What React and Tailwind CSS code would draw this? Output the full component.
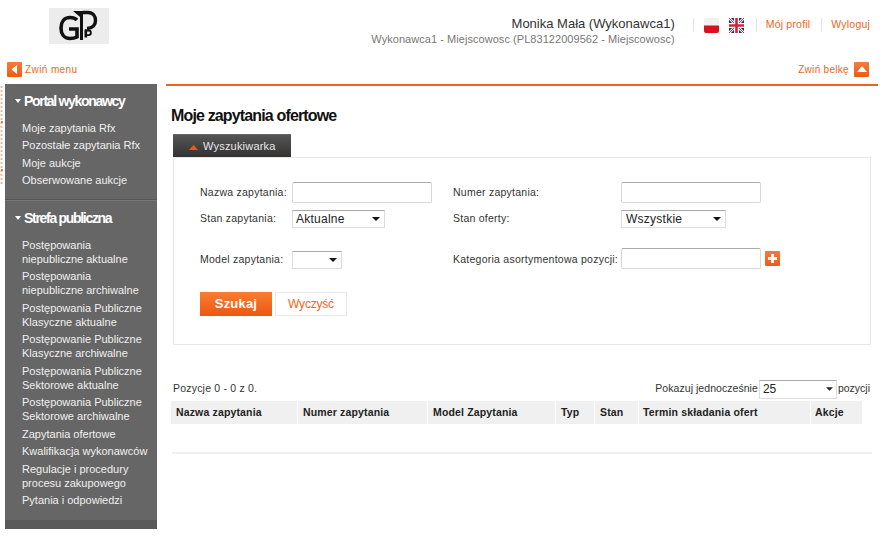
const LINK = "text-[#f26522]";
const sans = "font-['Liberation_Sans',Arial,sans-serif]";

function Logo() {
  return (
    <div className="w-[60px] h-[36px] bg-[#ececec]">
      <svg width="60" height="36" viewBox="0 0 60 36" className="block">
        <path d="M28 12 C26 10 23.5 9.5 21 9.5 C15 9.5 12 14 12 20 C12 26 15 30.5 21 30.5 C24 30.5 26 30 28 29 V21 H20" fill="none" stroke="#111" strokeWidth="3.6" />
        <path d="M24 3 H31 V9 Z" fill="#111" />
        <rect x="31" y="3" width="3" height="29" fill="#111" />
        <path d="M34 4.5 H39 C44 4.5 46.5 8 46.5 12.5 C46.5 17 44 20 38 20.5" fill="none" stroke="#111" strokeWidth="3.4" />
        <rect x="35.5" y="21.5" width="2.6" height="8" fill="#111" />
        <path d="M36 22.5 H39.6 a2.2 2.2 0 0 1 0 4.6 H36" fill="none" stroke="#111" strokeWidth="1.8" />
      </svg>
    </div>
  );
}

function OrangeBox({ children }) {
  return (
    <span className="w-[15px] h-[15px] bg-gradient-to-b from-[#f47b3c] to-[#ee5a14] flex items-center justify-center shrink-0 rounded-[1px]">
      {children}
    </span>
  );
}

function Flags() {
  return (
    <>
      <svg width="15" height="15" viewBox="0 0 15 15" className="block">
        <rect width="15" height="15" rx="2" fill="#f1f1f1" />
        <path d="M0 7.5 H15 V13 a2 2 0 0 1 -2 2 H2 a2 2 0 0 1 -2 -2 Z" fill="#d8101f" />
      </svg>
      <svg width="15" height="15" viewBox="0 0 15 15" className="block ml-[10px]">
        <rect width="15" height="15" rx="2" fill="#2b2f63" />
        <path d="M0 0 L15 15 M15 0 L0 15" stroke="#fff" strokeWidth="2.6" />
        <path d="M0 0 L15 15 M15 0 L0 15" stroke="#d3233a" strokeWidth="1" />
        <path d="M7.5 0 V15 M0 7.5 H15" stroke="#fff" strokeWidth="5" />
        <path d="M7.5 0 V15 M0 7.5 H15" stroke="#d3233a" strokeWidth="2.6" />
      </svg>
    </>
  );
}

function Header() {
  return (
    <header className="h-[58px] relative flex">
      <div className="pl-[49px] pt-[8px]"><Logo /></div>
      <div className="ml-auto pr-[20px] flex items-start pt-[16px]">
        <div className="text-right mr-[18px]">
          <div className="text-[13px] leading-[16px] text-[#333]">Monika Mała (Wykonawca1)</div>
          <div className="text-[11px] leading-[14px] tracking-[0.05px] text-[#777]">Wykonawca1 - Miejscowosc (PL83122009562 - Miejscowosc)</div>
        </div>
        <span className="w-px h-[14px] bg-[#e4e4e4] mt-[2px]" />
        <div className="flex ml-[10px] mt-[2px]"><Flags /></div>
        <span className="w-px h-[14px] bg-[#e4e4e4] ml-[12px] mt-[2px]" />
        <a className={`text-[10.5px] leading-[14px] mt-[1px] ml-[9px] tracking-[0.2px] ${LINK}`}>Mój profil</a>
        <span className="w-px h-[14px] bg-[#e4e4e4] ml-[11px] mt-[2px]" />
        <a className={`text-[10.5px] leading-[14px] mt-[1px] ml-[9px] tracking-[0.2px] ${LINK}`}>Wyloguj</a>
      </div>
    </header>
  );
}

function Bars() {
  return (
    <div className="h-[26px] flex items-center justify-between pl-[7px] pr-[21px] pb-[4px]">
      <div className="flex items-center gap-[3px]">
        <OrangeBox>
          <svg width="7" height="9" viewBox="0 0 7 9"><path d="M6 0 V9 L0.5 4.5 Z" fill="#fff" /></svg>
        </OrangeBox>
        <a className={`text-[10px] tracking-[0.4px] ${LINK}`}>Zwiń menu</a>
      </div>
      <div className="flex items-center gap-[5px]">
        <a className={`text-[10px] tracking-[0.3px] ${LINK}`}>Zwiń belkę</a>
        <OrangeBox>
          <svg width="10" height="6" viewBox="0 0 10 6"><path d="M5 0 L10 6 H0 Z" fill="#fff" /></svg>
        </OrangeBox>
      </div>
    </div>
  );
}

function SideHead({ children }) {
  return (
    <div className="flex items-center text-white font-bold text-[14px] leading-[18px] tracking-[-1.3px]">
      <svg width="6" height="4" viewBox="0 0 6 4" className="ml-[10px] mr-[3px]"><path d="M0 0 H6 L3 4 Z" fill="#fff" /></svg>
      {children}
    </div>
  );
}

function SideItem({ lines }) {
  return (
    <a className="block pl-[17px] text-[11px] leading-[14px] text-[#f0f0f0] mb-[3.5px]">
      {lines.map((l) => <div key={l}>{l}</div>)}
    </a>
  );
}

const publicItems = [
  ["Postępowania", "niepubliczne aktualne"],
  ["Postępowania", "niepubliczne archiwalne"],
  ["Postępowania Publiczne", "Klasyczne aktualne"],
  ["Postępowanie Publiczne", "Klasyczne archiwalne"],
  ["Postępowania Publiczne", "Sektorowe aktualne"],
  ["Postępowania Publiczne", "Sektorowe archiwalne"],
  ["Zapytania ofertowe"],
  ["Kwalifikacja wykonawców"],
  ["Regulacje i procedury", "procesu zakupowego"],
  ["Pytania i odpowiedzi"],
];

function Sidebar() {
  return (
    <aside className="w-[152px] ml-[5px] h-[445px] bg-[#666666] shrink-0 flex flex-col">
      <div className="pt-[8px] h-[116px] border-b border-[#555]">
        <SideHead>Portal wykonawcy</SideHead>
        <div className="mt-[10.9px]">
          {["Moje zapytania Rfx", "Pozostałe zapytania Rfx", "Moje aukcje", "Obserwowane aukcje"].map((t) => (
            <SideItem key={t} lines={[t]} />
          ))}
        </div>
      </div>
      <div className="pt-[8px] flex-1 border-t border-[#777]">
        <SideHead>Strefa publiczna</SideHead>
        <div className="mt-[10.9px]">
          {publicItems.map((l) => <SideItem key={l.join()} lines={l} />)}
        </div>
      </div>
      <div className="h-[9px] bg-[#595959]" />
    </aside>
  );
}

function Label({ children, className = "" }) {
  return <label className={`text-[10.5px] tracking-[0.25px] text-[#333] whitespace-nowrap ${className}`}>{children}</label>;
}

function Input({ className = "" }) {
  return <input className={`w-[140px] h-[21px] bg-white border border-[#d8d8d8] border-t-[#aaa] rounded-[2px] outline-none ${className}`} />;
}

function Select({ value, w, className = "", textClass = "" }) {
  return (
    <div className={`${w} ${className} h-[18px] border border-[#dcdcdc] border-t-[#aaa] flex items-center justify-between pl-[3px] pr-[4px] text-[12px] tracking-[0.25px] text-[#222] bg-white`}>
      <span className={textClass}>{value}</span>
      <svg width="8" height="4" viewBox="0 0 8 4"><path d="M0 0 H8 L4 4 Z" fill="#111" /></svg>
    </div>
  );
}

function SearchPanel() {
  return (
    <div>
      <div className="ml-[2px] w-[118px] h-[23px] bg-gradient-to-b from-[#555] to-[#333] border-t border-[#666] flex items-center pl-[16px] text-[11px] tracking-[0.2px] text-[#e8e8e8]">
        <svg width="9" height="5" viewBox="0 0 9 5" className="mr-[5px] mt-[2px]"><path d="M4.5 0 L9 5 H0 Z" fill="#e8591a" /></svg>
        Wyszukiwarka
      </div>
      <div className="ml-[2px] w-[698px] h-[188px] border border-[#e6e6e6] pl-[26px] pt-[24px]">
        <div className="grid grid-cols-[92px_161px_168px_1fr] items-center">
          <Label>Nazwa zapytania:</Label>
          <Input />
          <Label>Numer zapytania:</Label>
          <Input />
          <div className="col-span-4 h-[7px]" />
          <Label>Stan zapytania:</Label>
          <Select value="Aktualne" w="w-[93px]" />
          <Label>Stan oferty:</Label>
          <Select value="Wszystkie" w="w-[105px]" textClass="ml-[1px]" />
          <div className="col-span-4 h-[20px]" />
          <Label className="mt-[3px]">Model zapytania:</Label>
          <Select value="" w="w-[50px]" className="mt-[3px]" />
          <Label className="mt-[3px]">Kategoria asortymentowa pozycji:</Label>
          <div className="flex items-center gap-[4px]">
            <Input />
            <OrangeBox>
              <svg width="9" height="9" viewBox="0 0 9 9"><path d="M3 0 H6 V3 H9 V6 H6 V9 H3 V6 H0 V3 H3 Z" fill="#fff" /></svg>
            </OrangeBox>
          </div>
        </div>
        <div className="flex gap-[3px] mt-[23px]">
          <button className="w-[72px] h-[24px] bg-gradient-to-b from-[#f77e30] to-[#ee5510] text-white font-bold text-[13px] tracking-[0.2px]">Szukaj</button>
          <button className={`w-[72px] h-[24px] border border-[#e8e8e8] text-[12px] tracking-[-0.2px] ${LINK}`}>Wyczyść</button>
        </div>
      </div>
    </div>
  );
}

const cols = [
  ["Nazwa zapytania", "w-[126px] pl-[5px]"],
  ["Numer zapytania", "w-[129px] pl-[5px]"],
  ["Model Zapytania", "w-[127px] pl-[5px]"],
  ["Typ", "w-[38px] pl-[5px]"],
  ["Stan", "w-[43px] pl-[5px]"],
  ["Termin składania ofert", "w-[171px] pl-[4px]"],
  ["Akcje", "w-[51px] pl-[4px]"],
];

function Results() {
  return (
    <div className="mt-[34px]">
      <div className="flex items-center justify-between h-[20px] w-[699px]">
        <span className="ml-[2px] text-[10.5px] tracking-[0.2px] text-[#333]">Pozycje 0 - 0 z 0.</span>
        <div className="flex items-center text-[10.5px] text-[#333]">
          <span className="tracking-[0.05px]">Pokazuj jednocześnie</span>
          <div className="w-[78px] h-[19px] ml-px border border-[#ddd] border-t-[#aaa] flex items-center justify-between pl-[3px] pr-[3px] text-[12px] text-[#222]">
            <span>25</span>
            <svg width="7" height="4" viewBox="0 0 8 4"><path d="M0 0 H8 L4 4 Z" fill="#222" /></svg>
          </div>
          <span className="ml-px">pozycji</span>
        </div>
      </div>
      <div className="flex gap-[1px] mt-[2px]">
        {cols.map(([t, w]) => (
          <div key={t} className={`${w} h-[23px] bg-[#f0f0f0] flex items-center text-[10.5px] font-bold text-[#222] tracking-[0.15px] whitespace-nowrap`}>{t}</div>
        ))}
      </div>
      <div className="mt-[28px] h-[2px] w-[700px] ml-px bg-[#efefef]" />
    </div>
  );
}

export default function App() {
  return (
    <div className={`relative w-[890px] h-[540px] bg-white overflow-hidden ${sans}`}>
      <Header />
      <Bars />
      <svg width="3" height="100" viewBox="0 0 3 100" className="absolute left-0 top-[86px]">
        <path d="M1.5 0 V100" stroke="#f6b89a" strokeWidth="2" strokeDasharray="2 2" />
        <path d="M1 36 H3 M1 84 H3" stroke="#e8591a" strokeWidth="1.5" />
      </svg>
      <div className="flex">
        <Sidebar />
        <main className="ml-[9px] w-[712px] border-t-2 border-[#ea6420] pl-[5px]">
          <h1 className="mt-[20px] mb-[8px] text-[16px] leading-[20px] font-bold tracking-[-0.85px] text-[#111]">Moje zapytania ofertowe</h1>
          <SearchPanel />
          <Results />
        </main>
      </div>
    </div>
  );
}
